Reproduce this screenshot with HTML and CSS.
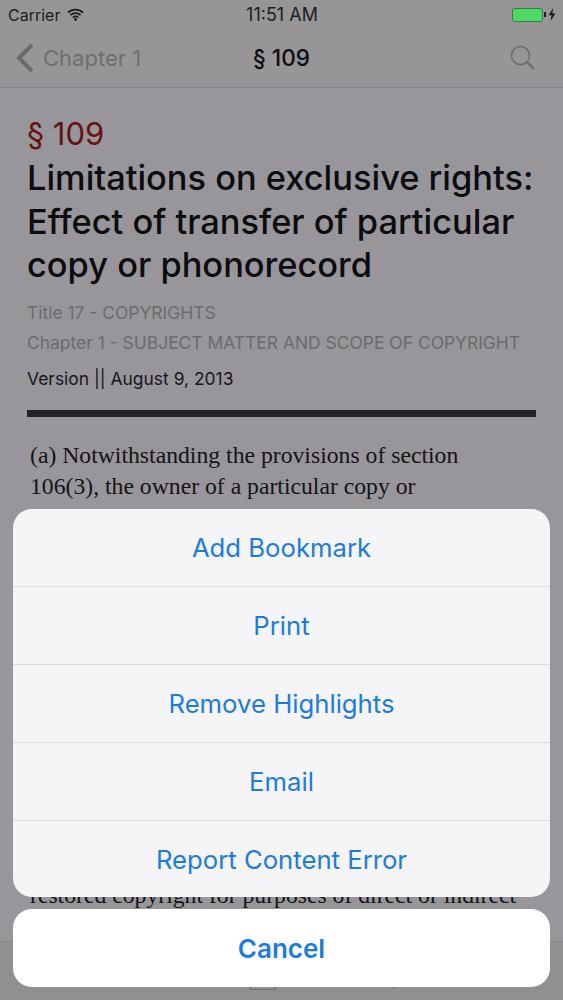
FILE: index.html
```html
<!DOCTYPE html>
<html lang="en">
<head>
<meta charset="utf-8">
<title>§ 109</title>
<link rel="stylesheet" href="styles.css">
</head>
<body>
<div class="screen">
  <header class="top">
    <div class="status">
      <div class="status-left">
        <span>Carrier</span>
        <svg class="wifi" width="17" height="13" viewBox="0 0 17 13"><path d="M1 4.6C5.2.6 11.8.6 16 4.6M3.4 7.2c2.9-2.7 7.3-2.7 10.2 0M5.8 9.6c1.5-1.3 3.9-1.3 5.4 0" fill="none" stroke="#1d1c1f" stroke-width="1.8"/><circle cx="8.5" cy="11.5" r="1.4" fill="#1d1c1f"/></svg>
      </div>
      <div class="status-time">11:51 AM</div>
      <div class="status-right">
        <span class="battery"></span>
        <span class="battery-nub"></span>
        <svg class="bolt" width="8" height="13" viewBox="0 0 8 13"><path d="M5.2 0 .6 7.2h2.9L2.6 13l4.8-7.6H4.4z" fill="#1d1c1f"/></svg>
      </div>
    </div>
    <nav class="nav">
      <div class="nav-back">
        <svg width="20" height="30" viewBox="0 0 20 30"><path d="M17 2 4 15l13 13" fill="none" stroke="#69686b" stroke-width="4"/></svg>
        <span>Chapter 1</span>
      </div>
      <div class="nav-title">§ 109</div>
      <svg class="nav-search" width="26" height="26" viewBox="0 0 26 26"><circle cx="10.5" cy="10.5" r="9" fill="none" stroke="#6d6c6f" stroke-width="1.5"/><path d="M17 17l7 7" fill="none" stroke="#6d6c6f" stroke-width="2.2"/></svg>
    </nav>
  </header>

  <main class="article">
    <div class="section-num">§ 109</div>
    <h1 class="heading">Limitations on exclusive rights: Effect of transfer of particular copy or phonorecord</h1>
    <p class="meta">Title 17 - COPYRIGHTS</p>
    <p class="meta">Chapter 1 - SUBJECT MATTER AND SCOPE OF COPYRIGHT</p>
    <p class="version">Version || August 9, 2013</p>
    <div class="rule"></div>
    <p class="body-text">(a) Notwithstanding the provisions of section<br>106(3), the owner of a particular copy or<br>phonorecord lawfully made under this title, or<br>any person authorized by such owner, is<br>entitled, without the authority of the copyright<br>owner, to sell or otherwise dispose of the<br>possession of that copy or phonorecord.<br>Notwithstanding the preceding sentence, copies<br>of works subject to restored copyright under<br>section 104A that are manufactured before the<br>date of restoration of copyright or, with respect<br>to reliance parties, before publication of notice,<br>may be sold or otherwise disposed of without<br>the authorization of the owner of the<br>restored copyright for purposes of direct or indirect</p>
  </main>

  <footer class="toolbar">
    <span class="tool-icon"></span>
    <span class="tool-tick"></span>
  </footer>

  <div class="sheet">
    <div class="sheet-group">
      <div class="sheet-row">Add Bookmark</div>
      <div class="sheet-row">Print</div>
      <div class="sheet-row">Remove Highlights</div>
      <div class="sheet-row">Email</div>
      <div class="sheet-row">Report Content Error</div>
    </div>
    <div class="sheet-cancel">Cancel</div>
  </div>
</div>
</body>
</html>
```
FILE: styles.css
```css
* { box-sizing: border-box; }
html, body { margin: 0; padding: 0; }
body { font-family: Inter, "Liberation Sans", sans-serif; background: #98969a; }
.screen { position: relative; width: 563px; height: 1000px; overflow: hidden; display: flex; flex-direction: column; background: #98969a; color: #0e0d10; }

.top { height: 88px; flex: none; border-bottom: 1px solid #848386; background: #979598; }
.status { height: 29px; display: grid; grid-template-columns: 1fr auto 1fr; align-items: center; padding: 0 7px 0 8px; font-size: 16px; color: #1d1c1f; }
.status-left { display: flex; align-items: center; gap: 7px; }
.status-time { font-size: 18px; }
.status-right { display: flex; align-items: center; justify-content: flex-end; }
.battery { width: 31px; height: 14px; border: 1px solid #3d7a4c; border-radius: 3px; background: #4cd964; display: block; }
.battery-nub { width: 2px; height: 5px; background: #1d1c1f; margin-left: 1px; margin-right: 2px; }
.nav { position: relative; height: 57px; display: flex; align-items: center; justify-content: space-between; padding: 0 27px 0 15px; }
.nav-back { display: flex; align-items: center; gap: 8px; font-size: 22px; color: #6f6e71; }
.nav-title { position: absolute; left: 0; right: 0; text-align: center; font-size: 22.6px; font-weight: 500; pointer-events: none; }

.article { flex: 1; min-height: 0; overflow: hidden; padding: 27px 27px 0; }
.section-num { font-size: 31px; line-height: 38px; color: #651216; }
.heading { margin: 3px 0 0; font-size: 34.4px; line-height: 43.5px; font-weight: 500; color: #0c0b0e; }
.meta { margin: 0; font-size: 17.45px; line-height: 30px; color: #6c6b6e; }
.meta:first-of-type { margin-top: 11.5px; }
.version { margin: 6px 0 0; font-size: 17.45px; line-height: 30px; color: #17161a; }
.rule { height: 7px; background: #222125; margin-top: 16px; width: 509px; }
.body-text { margin: 23px 0 0 3px; font-family: "Liberation Serif", serif; font-size: 23.7px; line-height: 31.4px; color: #141316; white-space: nowrap; }

.toolbar { height: 59px; flex: none; border-top: 1px solid #858487; background: #908f92; position: relative; }
.tool-icon { position: absolute; left: 250px; top: 45px; width: 26px; height: 3px; border: 1px solid #6f6e71; border-top: none; }
.tool-tick { position: absolute; left: 393px; top: 45px; width: 1px; height: 2px; background: #6f6e71; }

.sheet { position: absolute; left: 13px; right: 13px; top: 509px; display: flex; flex-direction: column; gap: 12px; }
.sheet-group { background: #f5f4f6; border-radius: 19px; overflow: hidden; }
.sheet-row { height: 78px; display: flex; align-items: center; justify-content: center; font-size: 25.7px; color: #1b7cdc; border-top: 1px solid #dddcde; }
.sheet-row:first-child { border-top: none; height: 77px; }
.sheet-row:last-child { height: 77px; }
.sheet-cancel { height: 78px; background: #fff; border-radius: 19px; display: flex; align-items: center; justify-content: center; font-size: 26px; font-weight: 600; color: #1b7cdc; }
```
